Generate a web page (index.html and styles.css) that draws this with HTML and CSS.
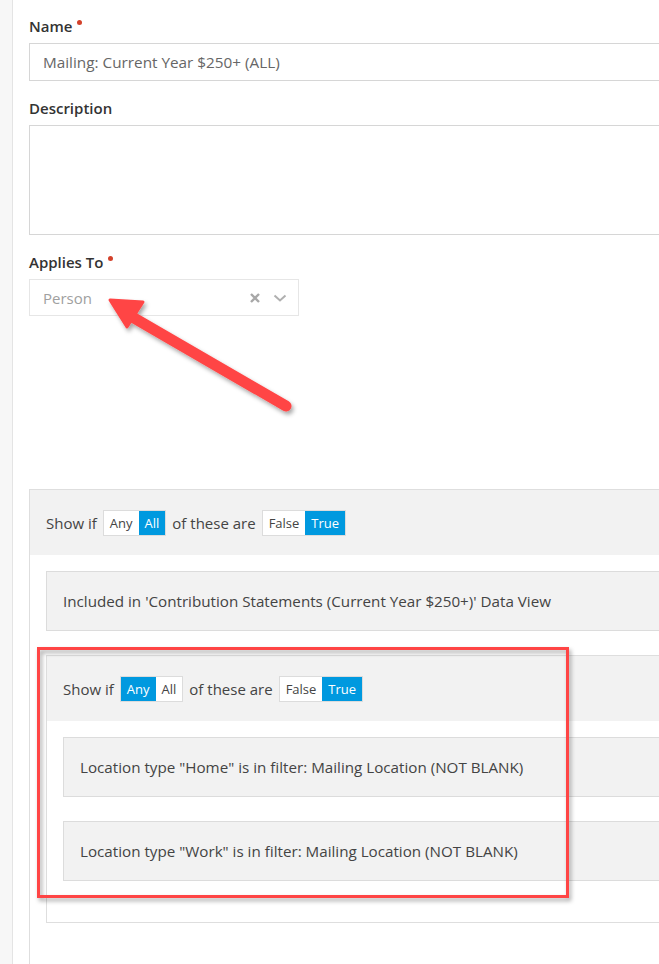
FILE: index.html
```html
<!DOCTYPE html>
<html lang="en">
<head>
  <meta charset="UTF-8">
  <meta name="viewport" content="width=device-width, initial-scale=1.0">
  <title>Data View Filter</title>
  <link rel="stylesheet" href="styles.css">
</head>
<body>

<div class="page">
  <div class="rail"></div>

  <main class="form">
    <div class="field">
      <label class="label required">Name</label>
      <input class="control" type="text" value="Mailing: Current Year $250+ (ALL)">
    </div>

    <div class="field">
      <label class="label">Description</label>
      <textarea class="control area"></textarea>
    </div>

    <div class="field">
      <label class="label required">Applies To</label>
      <div class="picker">
        <span class="picker-value">Person</span>
        <svg class="picker-icon" width="12" height="12" viewBox="0 0 12 12">
          <path d="M2 2 L10 10 M10 2 L2 10" stroke="#a8a8a8" stroke-width="2.4" stroke-linecap="butt"/>
        </svg>
        <svg class="picker-icon" width="14" height="10" viewBox="0 0 14 10">
          <path d="M1.5 2.5 L7 7.5 L12.5 2.5" fill="none" stroke="#b0b0b0" stroke-width="2"/>
        </svg>
      </div>
    </div>

    <div class="filter-group">
      <div class="filter-head">
        Show if
        <span class="toggle"><span>Any</span><span class="on">All</span></span>
        of these are
        <span class="toggle"><span>False</span><span class="on">True</span></span>
      </div>
      <div class="filter-body">
        <div class="filter-item">Included in 'Contribution Statements (Current Year $250+)' Data View</div>

        <div class="filter-group">
          <div class="filter-head">
            Show if
            <span class="toggle"><span class="on">Any</span><span>All</span></span>
            of these are
            <span class="toggle"><span>False</span><span class="on">True</span></span>
          </div>
          <div class="filter-body">
            <div class="filter-item">Location type "Home" is in filter: Mailing Location (NOT BLANK)</div>
            <div class="filter-item">Location type "Work" is in filter: Mailing Location (NOT BLANK)</div>
          </div>
        </div>
      </div>
    </div>
  </main>

  <!-- callouts drawn on top of the form -->
  <svg class="callouts" width="659" height="964" viewBox="0 0 659 964">
    <defs>
      <filter id="shade" x="-10%" y="-10%" width="130%" height="130%">
        <feDropShadow dx="2" dy="3" stdDeviation="2" flood-color="#000" flood-opacity="0.35"/>
      </filter>
    </defs>
    <g filter="url(#shade)">
      <path d="M134 318 L286 406" stroke="#ff4545" stroke-width="11" stroke-linecap="round"/>
      <path d="M110 300 L143 302 L127 327 Z" fill="#ff4545" stroke="#ff4545" stroke-width="3" stroke-linejoin="round"/>
      <rect x="38.5" y="648.5" width="529" height="248" fill="none" stroke="#ff4545" stroke-width="3"/>
    </g>
  </svg>
</div>

</body>
</html>
```

FILE: styles.css
```css
body {
  margin: 0;
  background: #fff;
  font-family: 'Open Sans', 'Segoe UI', sans-serif;
  font-size: 14px;
  color: #444;
  overflow: hidden;
}

.page {
  position: relative;
  display: flex;
  width: 659px;
  height: 964px;
  overflow: hidden;
}

.rail {
  flex: 0 0 12px;
  background: #f7f7f7;
  border-right: 1px solid #e4e4e4;
}

.form {
  flex: 0 0 auto;
  width: 800px;
  padding: 16px 0 0 16px;
}

.field {
  margin-bottom: 17px;
}

.label {
  display: block;
  font-size: 15px;
  font-weight: 600;
  line-height: 20px;
  color: #333;
  margin-bottom: 7px;
}

.required::after {
  content: "";
  display: inline-block;
  width: 5px;
  height: 5px;
  margin-left: 5px;
  border-radius: 50%;
  background: #d3412b;
  vertical-align: 7px;
}

.control {
  display: block;
  box-sizing: border-box;
  width: 100%;
  height: 38px;
  padding: 0 13px;
  border: 1px solid #d6d6d6;
  font: inherit;
  font-size: 15.3px;
  color: #666;
  background: #fff;
  outline: none;
}

.area {
  height: 110px;
  resize: none;
}

.picker {
  display: flex;
  align-items: center;
  gap: 12px;
  box-sizing: border-box;
  width: 270px;
  height: 37px;
  padding: 0 11px 0 13px;
  border: 1px solid #e6e6e6;
  font-size: 15px;
}

.picker-value {
  flex: 1;
  color: #a0a0a0;
  padding-top: 1px;
}

.filter-group {
  border: 1px solid #dedede;
  margin-top: 173px;
}

.filter-body .filter-group {
  margin-top: 0;
  margin-bottom: 24px;
}

.filter-head {
  display: flex;
  align-items: center;
  gap: 6px;
  height: 65px;
  padding-left: 16px;
  background: #f2f2f2;
  font-size: 15px;
  color: #444;
}

.toggle {
  display: flex;
  height: 24px;
  border: 1px solid #dcdcdc;
  background: #fff;
  font-size: 13px;
}

.toggle span {
  display: flex;
  align-items: center;
  padding: 0 6px;
  color: #444;
}

.toggle .on {
  background: #0099df;
  color: #fff;
}

.filter-body {
  padding: 16px 0 17px 16px;
}

.filter-item {
  box-sizing: border-box;
  height: 60px;
  display: flex;
  align-items: center;
  padding-left: 16px;
  margin-bottom: 24px;
  border: 1px solid #dcdcdc;
  background: #f2f2f2;
  font-size: 15.2px;
  color: #444;
}

.callouts {
  position: absolute;
  left: 0;
  top: 0;
  pointer-events: none;
}
```
